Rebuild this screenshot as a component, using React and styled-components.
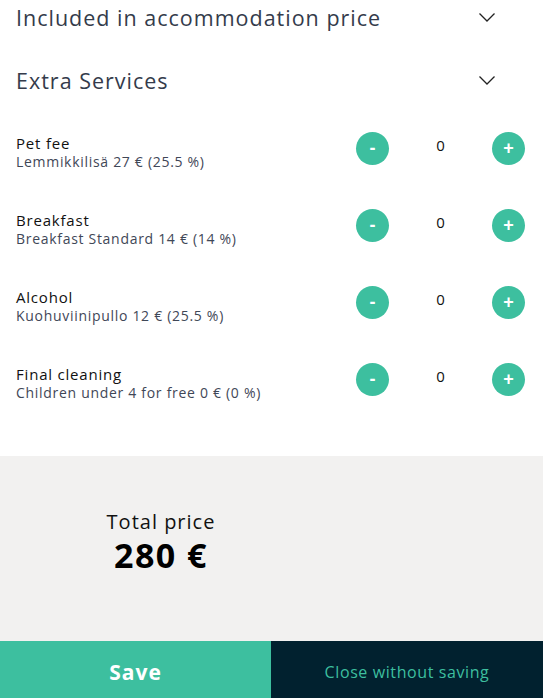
import React from 'react';
import styled, { createGlobalStyle } from 'styled-components';

const services = [
  { name: 'Pet fee', desc: 'Lemmikkilisä 27 € (25.5 %)', count: 0 },
  { name: 'Breakfast', desc: 'Breakfast Standard 14 € (14 %)', count: 0 },
  { name: 'Alcohol', desc: 'Kuohuviinipullo 12 € (25.5 %)', count: 0 },
  { name: 'Final cleaning', desc: 'Children under 4 for free 0 € (0 %)', count: 0 },
];

const Chevron = () => (
  <svg width="16" height="9" viewBox="0 0 16 9" fill="none">
    <path d="M0.5 0.5l7.5 7.5 7.5-7.5" stroke="#222" strokeWidth="1.3" />
  </svg>
);

export default () => (
  <Page>
    <GlobalStyle />
    <Content>
      <Section>
        <SectionTitle>Included in accommodation price</SectionTitle>
        <Toggle><Chevron /></Toggle>
      </Section>
      <Section>
        <SectionTitle>Extra Services</SectionTitle>
        <Toggle><Chevron /></Toggle>
      </Section>
      <List>
        {services.map(s => (
          <Row key={s.name}>
            <Info>
              <Name>{s.name}</Name>
              <Desc>{s.desc}</Desc>
            </Info>
            <Counter>
              <RoundButton>-</RoundButton>
              <Count>{s.count}</Count>
              <RoundButton>+</RoundButton>
            </Counter>
          </Row>
        ))}
      </List>
    </Content>
    <Summary>
      <TotalLabel>Total price</TotalLabel>
      <TotalValue>280 €</TotalValue>
    </Summary>
    <Footer>
      <SaveButton>Save</SaveButton>
      <CloseButton>Close without saving</CloseButton>
    </Footer>
  </Page>
);

const GlobalStyle = createGlobalStyle`
  body {
    margin: 0;
    font-family: "Open Sans", "Liberation Sans", sans-serif;
    background: #fff;
  }
`;

const Page = styled.div`
  width: 543px;
  height: 698px;
  display: flex;
  flex-direction: column;
  overflow: hidden;
`;

const Content = styled.div`
  padding: 0 18px 0 16px;
  height: 456px;
  box-sizing: border-box;
`;

const Section = styled.div`
  display: flex;
  align-items: center;
  justify-content: space-between;
  height: 34px;
  margin-bottom: 29px;
`;

const SectionTitle = styled.h2`
  margin: 0;
  font-size: 21.5px;
  font-weight: 400;
  letter-spacing: 1px;
  color: #343b4b;
`;

const Toggle = styled.div`
  display: flex;
  width: 16px;
  margin-right: 30px;
`;

const List = styled.div`
  display: flex;
  flex-direction: column;
  gap: 36px;
  padding-top: 6px;
`;

const Row = styled.div`
  display: flex;
  align-items: center;
  justify-content: space-between;
  height: 41px;
`;

const Info = styled.div`
  display: flex;
  flex-direction: column;
  margin-top: -1px;
`;

const Name = styled.div`
  font-size: 15px;
  letter-spacing: 0.8px;
  color: #111;
  line-height: 20px;
`;

const Desc = styled.div`
  font-size: 14px;
  letter-spacing: 0.7px;
  color: #3f4757;
  line-height: 18px;
`;

const Counter = styled.div`
  display: flex;
  align-items: center;
  margin-top: -9px;
`;

const RoundButton = styled.button`
  width: 33px;
  height: 33px;
  border-radius: 50%;
  border: none;
  background: #3dbf9f;
  color: #fff;
  font-family: "Liberation Sans", sans-serif;
  font-weight: 700;
  font-size: 18px;
  padding: 0;
  display: flex;
  align-items: center;
  justify-content: center;
`;

const Count = styled.div`
  width: 103px;
  text-align: center;
  font-size: 15px;
  color: #111;
  margin-top: -6px;
`;

const Summary = styled.div`
  height: 185px;
  background: #f2f1f0;
  display: flex;
  flex-direction: column;
  align-items: center;
  justify-content: center;
  box-sizing: border-box;
  padding: 0 221px 13px 0;
`;

const TotalLabel = styled.div`
  font-size: 20px;
  letter-spacing: 1px;
  color: #111;
  line-height: 26px;
`;

const TotalValue = styled.div`
  font-size: 34px;
  font-weight: 700;
  letter-spacing: 1.5px;
  line-height: 40px;
  color: #000;
`;

const Footer = styled.div`
  display: flex;
  height: 57px;
`;

const SaveButton = styled.button`
  flex: 0 0 271px;
  border: none;
  background: #3dbf9f;
  color: #fff;
  font-family: "Open Sans", sans-serif;
  font-size: 21px;
  font-weight: 700;
  letter-spacing: 1px;
  padding-top: 5px;
`;

const CloseButton = styled.button`
  flex: 1;
  border: none;
  background: #01212f;
  color: #3dbf9f;
  font-family: "Open Sans", sans-serif;
  font-size: 16px;
  letter-spacing: 0.6px;
  padding-top: 6px;
`;
